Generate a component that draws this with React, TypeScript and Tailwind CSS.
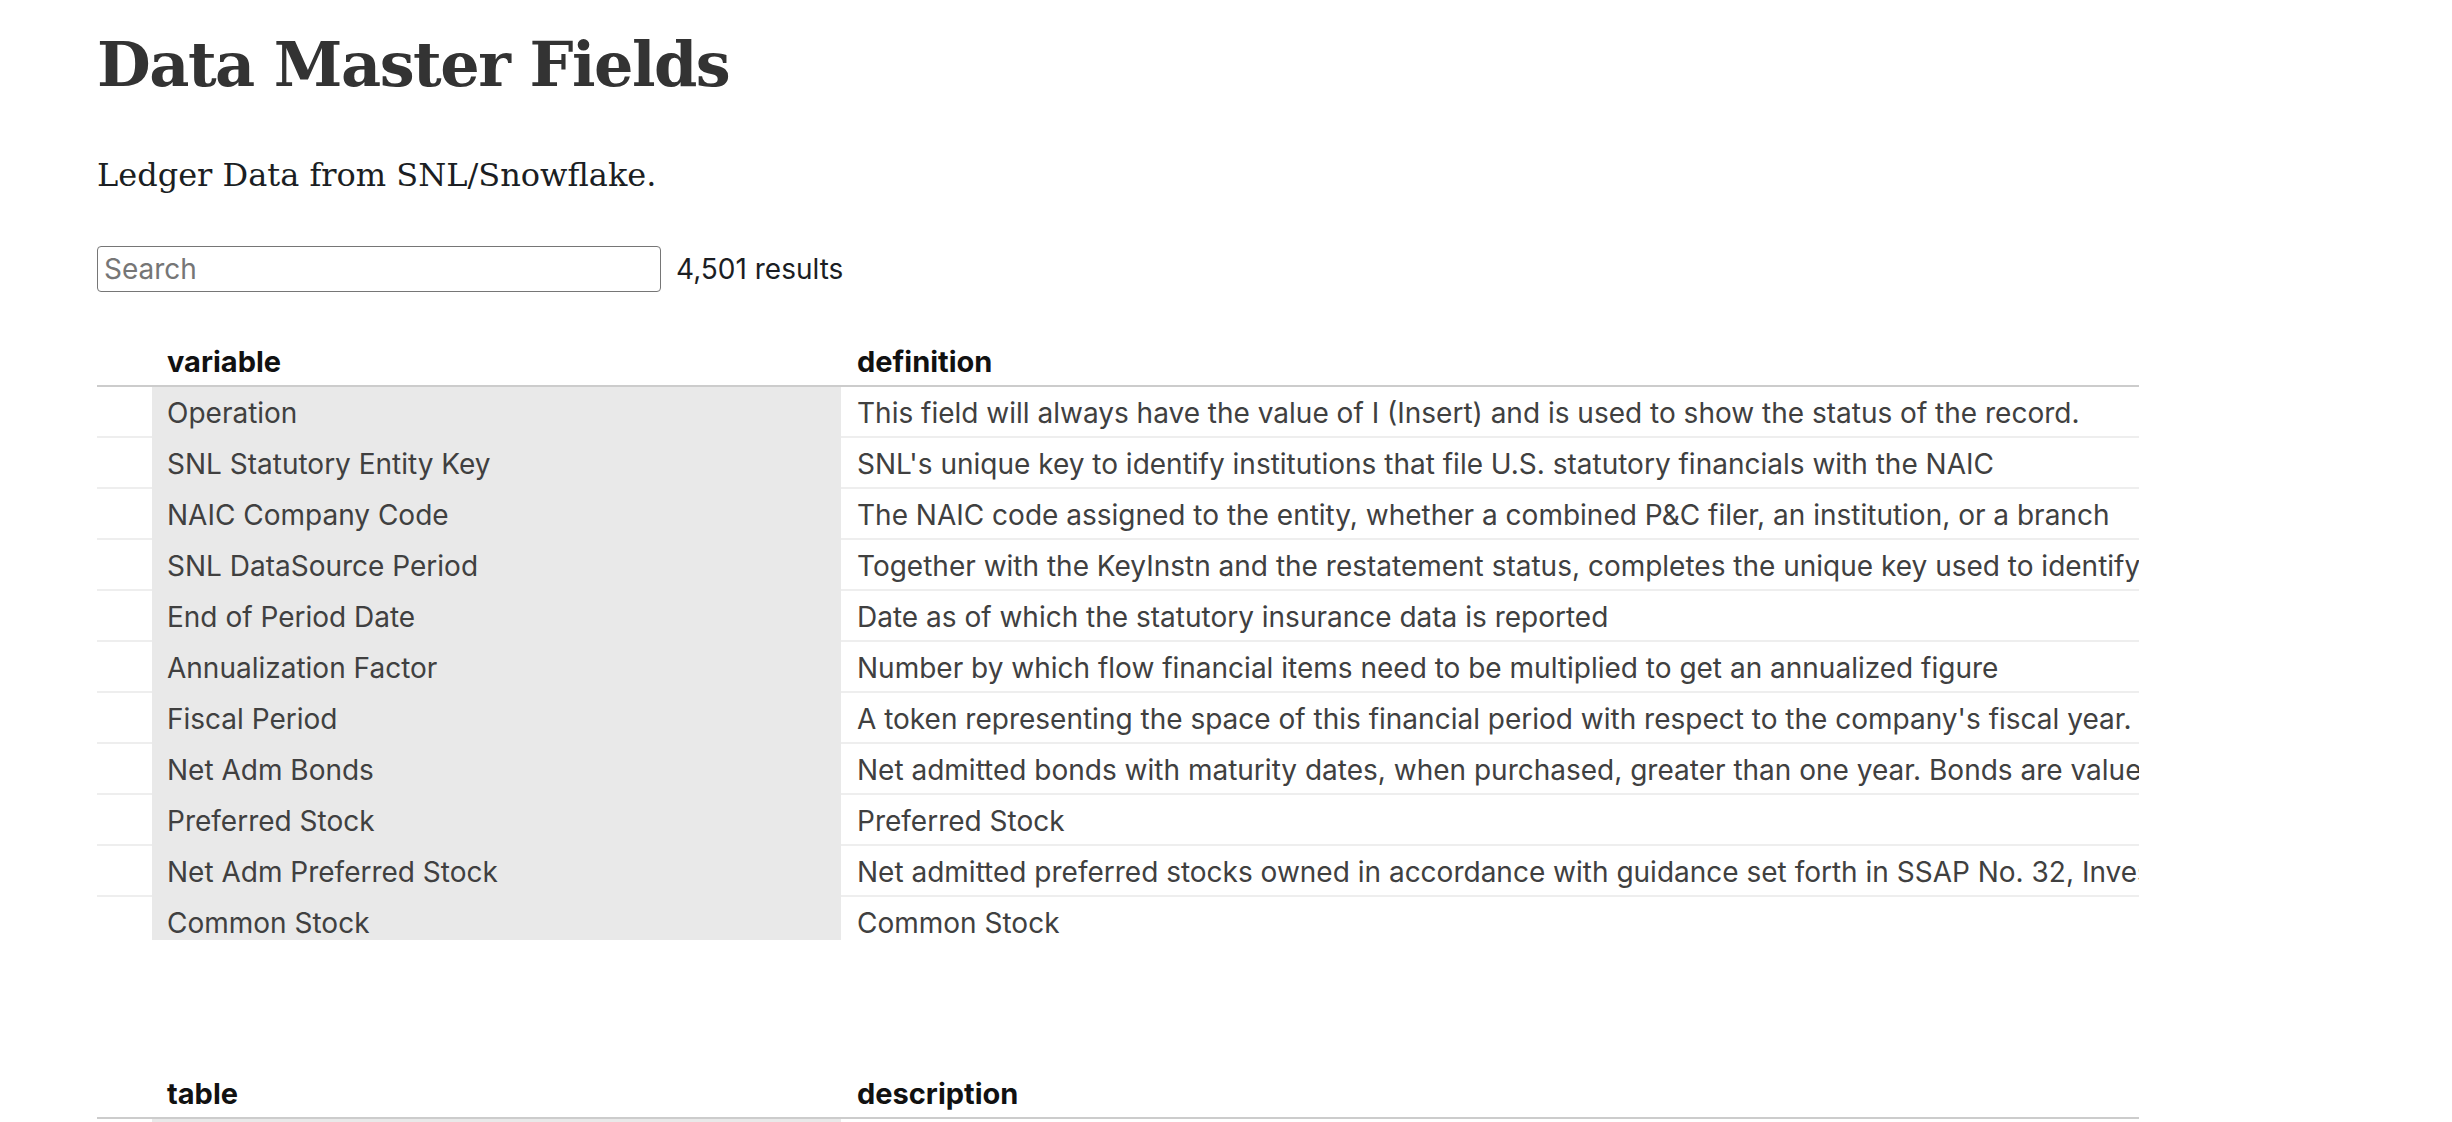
import React from "react";

const rows: [string, string][] = [
  ["Operation", "This field will always have the value of I (Insert) and is used to show the status of the record."],
  ["SNL Statutory Entity Key", "SNL's unique key to identify institutions that file U.S. statutory financials with the NAIC"],
  ["NAIC Company Code", "The NAIC code assigned to the entity, whether a combined P&C filer, an institution, or a branch"],
  ["SNL DataSource Period", "Together with the KeyInstn and the restatement status, completes the unique key used to identify a statutory financial period"],
  ["End of Period Date", "Date as of which the statutory insurance data is reported"],
  ["Annualization Factor", "Number by which flow financial items need to be multiplied to get an annualized figure"],
  ["Fiscal Period", "A token representing the space of this financial period with respect to the company's fiscal year."],
  ["Net Adm Bonds", "Net admitted bonds with maturity dates, when purchased, greater than one year. Bonds are valued in accordance with SSAP No. 26"],
  ["Preferred Stock", "Preferred Stock"],
  ["Net Adm Preferred Stock", "Net admitted preferred stocks owned in accordance with guidance set forth in SSAP No. 32, Investments in Preferred Stock"],
  ["Common Stock", "Common Stock"],
  ["Net Adm Common Stock", "Net admitted common stocks owned in accordance with guidance set forth in SSAP No. 30"],
];

const tables: [string, string][] = [
  ["Statutory Balance Sheet", "Assets, liabilities and surplus reported in the statutory annual statement"],
  ["Statutory Income Statement", "Underwriting and investment income reported in the statutory annual statement"],
];

const sans = "font-['Inter','Liberation_Sans',sans-serif]";

function DataTable({ head, data, height }: { head: [string, string]; data: [string, string][]; height: string }) {
  return (
    <div className={`w-[2042px] overflow-hidden ${height}`}>
      <table className={`w-[2042px] table-fixed border-collapse text-[28px] ${sans}`}>
        <colgroup>
          <col className="w-[55px]" />
          <col className="w-[689px]" />
          <col />
        </colgroup>
        <thead>
          <tr>
            <th className="border-b-2 border-[#cccccc] p-0"></th>
            <th className="border-b-2 border-[#cccccc] pl-[15px] pt-[3px] text-left text-[29px] font-bold leading-[46px] text-[#111111]">
              {head[0]}
            </th>
            <th className="border-b-2 border-[#cccccc] pl-[16px] pt-[3px] text-left text-[29px] font-bold leading-[46px] text-[#111111]">
              {head[1]}
            </th>
          </tr>
        </thead>
        <tbody>
          {data.map(([a, b]) => (
            <tr key={a}>
              <td className="border-b-2 border-[#eeeeee] p-0"></td>
              <td className="overflow-hidden whitespace-nowrap border-b-2 border-[#e9e9e9] bg-[#e9e9e9] pl-[15px] pt-[3px] leading-[46px] text-[#404040]">
                {a}
              </td>
              <td className="overflow-hidden whitespace-nowrap border-b-2 border-[#eeeeee] pl-[16px] pt-[3px] leading-[46px] text-[#404040]">
                {b}
              </td>
            </tr>
          ))}
        </tbody>
      </table>
    </div>
  );
}

export default function App() {
  return (
    <div className="h-[1122px] w-[2452px] overflow-hidden bg-white pl-[97px]">
      <h1 className="mt-[34px] text-[62px] font-bold leading-none tracking-[-1.5px] text-[#333333] font-['DejaVu_Serif',serif]">
        Data Master Fields
      </h1>
      <p className="mt-[63px] text-[32px] leading-none text-[#1b1e23] font-['DejaVu_Serif',serif]">
        Ledger Data from SNL/Snowflake.
      </p>
      <div className="mt-[55px] flex items-center gap-[15px]">
        <input
          type="text"
          placeholder="Search"
          className={`h-[46px] w-[564px] rounded-[4px] border-[1.5px] border-[#767676] px-[6px] text-[28px] text-[#1b1e23] outline-none placeholder:text-[#767676] ${sans}`}
        />
        <span className={`text-[28px] text-[#1b1e23] ${sans}`}>4,501 results</span>
      </div>
      <div className="mt-[44px]">
        <DataTable head={["variable", "definition"]} data={rows} height="h-[604px]" />
      </div>
      <div className="mt-[128px]">
        <DataTable head={["table", "description"]} data={tables} height="h-[400px]" />
      </div>
    </div>
  );
}
